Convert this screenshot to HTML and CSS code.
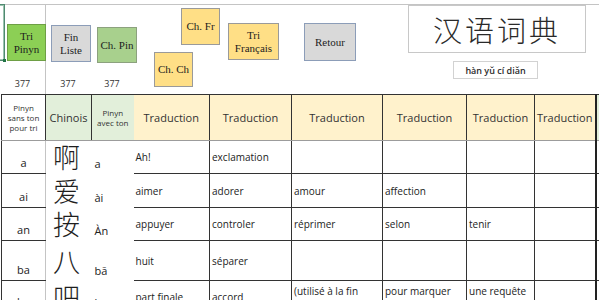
FILE: index.html
```html
<!DOCTYPE html>
<html lang="fr">
<head>
<meta charset="utf-8">
<title>汉语词典</title>
<link rel="stylesheet" href="styles.css">
</head>
<body>
<div class="sheet">
  <div class="top">
    <div class="topgrid">
      <div class="tcell tc1"><span class="count">377</span></div>
      <div class="tcell tc2"><span class="count">377</span></div>
      <div class="tcell tc3"><span class="count">377</span></div>
    </div>

    <div class="selection"><span class="handle"></span></div>

    <div class="shape green tri-pinyn">Tri<br>Pinyn</div>
    <div class="shape grey fin-liste">Fin<br>Liste</div>
    <div class="shape sage ch-pin">Ch. Pin</div>
    <div class="shape amber ch-ch">Ch. Ch</div>
    <div class="shape amber ch-fr">Ch. Fr</div>
    <div class="shape amber tri-fr">Tri<br>Français</div>
    <div class="shape grey retour">Retour</div>

    <div class="title-box">汉语词典</div>
    <div class="pinyin-box">hàn yǔ cí diǎn</div>
  </div>

  <table class="dict">
    <colgroup>
      <col class="w-py"><col class="w-zh"><col class="w-ton">
      <col class="w-t1"><col class="w-t2"><col class="w-t3">
      <col class="w-t4"><col class="w-t5"><col class="w-t6"><col class="w-end">
    </colgroup>
    <thead>
      <tr class="head">
        <th class="h-py small">Pinyn<br>sans ton<br>pour tri</th>
        <th class="h-zh green-h">Chinois</th>
        <th class="h-ton green-h small">Pinyn<br>avec ton</th>
        <th class="h-tr first yellow-h">Traduction</th>
        <th class="h-tr yellow-h">Traduction</th>
        <th class="h-tr yellow-h">Traduction</th>
        <th class="h-tr yellow-h">Traduction</th>
        <th class="h-tr yellow-h">Traduction</th>
        <th class="h-tr yellow-h">Traduction</th>
        <th class="h-end green-h"></th>
      </tr>
    </thead>
    <tbody>
      <tr class="r1">
        <td class="py">a</td><td class="zh">啊</td><td class="ton">a</td>
        <td class="tr first">Ah!</td><td class="tr">exclamation</td><td class="tr"></td>
        <td class="tr"></td><td class="tr"></td><td class="tr"></td><td class="end"></td>
      </tr>
      <tr class="r2">
        <td class="py">ai</td><td class="zh">爱</td><td class="ton">ài</td>
        <td class="tr first">aimer</td><td class="tr">adorer</td><td class="tr">amour</td>
        <td class="tr">affection</td><td class="tr"></td><td class="tr"></td><td class="end"></td>
      </tr>
      <tr class="r3">
        <td class="py">an</td><td class="zh">按</td><td class="ton">Àn</td>
        <td class="tr first">appuyer</td><td class="tr">controler</td><td class="tr">réprimer</td>
        <td class="tr">selon</td><td class="tr">tenir</td><td class="tr"></td><td class="end"></td>
      </tr>
      <tr class="r4">
        <td class="py">ba</td><td class="zh">八</td><td class="ton">bā</td>
        <td class="tr first">huit</td><td class="tr">séparer</td><td class="tr"></td>
        <td class="tr"></td><td class="tr"></td><td class="tr"></td><td class="end"></td>
      </tr>
      <tr class="r5">
        <td class="py">ba</td><td class="zh">吧</td><td class="ton">ba</td>
        <td class="tr first">part finale</td><td class="tr">accord</td><td class="tr wrap">(utilisé à la fin</td>
        <td class="tr wrap">pour marquer</td><td class="tr wrap">une requête</td><td class="tr"></td><td class="end"></td>
      </tr>
    </tbody>
  </table>
</div>
</body>
</html>
```

FILE: styles.css
```css
html, body {
  margin: 0;
  padding: 0;
  background: #ffffff;
}

.sheet {
  width: 599px;
  height: 300px;
  overflow: hidden;
  font-family: "Open Sans", "Liberation Sans", sans-serif;
  color: #222222;
}

/* ---- upper band with the macro buttons ---- */
.top {
  position: relative;
  height: 94px;
  padding-top: 4px;
  box-sizing: border-box;
}

.topgrid {
  height: 90px;
  box-sizing: border-box;
  border-top: 1px solid #c4c4c4;
  display: flex;
}

.tcell {
  display: flex;
  align-items: flex-end;
  justify-content: center;
  padding-bottom: 4px;
  box-sizing: border-box;
}

.tc1 { width: 46px; border-right: 1px solid #c4c4c4; }
.tc2 { width: 44px; }
.tc3 { width: 44px; }

.count {
  font-size: 9px;
  line-height: 12px;
  color: #333333;
}

/* active cell outline */
.selection {
  position: absolute;
  left: -3px;
  top: 4px;
  width: 8px;
  height: 57px;
  box-sizing: border-box;
  border: 1px solid #4f8a70;
  box-shadow: inset 0 0 0 1px #9cc3b0;
}

.selection .handle {
  position: absolute;
  right: -2px;
  bottom: -2px;
  width: 3px;
  height: 3px;
  background: #217346;
}

.shape {
  position: absolute;
  box-sizing: border-box;
  display: flex;
  align-items: center;
  justify-content: center;
  text-align: center;
  font-family: "Liberation Serif", "Times New Roman", serif;
  font-size: 11px;
  line-height: 13px;
  color: #1d1d1d;
  border: 1px solid #8a8a8a;
}

.green { background: #8ccf55; border-color: #6e9f45; }
.grey  { background: #d9d9d9; border-color: #8c9db8; }
.sage  { background: #a8d08d; border-color: #8ca17e; }
.amber { background: #ffdf86; border-color: #9a9a9a; }

.tri-pinyn { left: 7px;   top: 24px; width: 39px; height: 37px; }
.fin-liste { left: 51px;  top: 25px; width: 40px; height: 37px; }
.ch-pin    { left: 97px;  top: 27px; width: 40px; height: 36px; }
.ch-ch     { left: 154px; top: 52px; width: 39px; height: 35px; }
.ch-fr     { left: 181px; top: 8px;  width: 39px; height: 37px; }
.tri-fr    { left: 228px; top: 23px; width: 51px; height: 37px; }
.retour    { left: 304px; top: 23px; width: 52px; height: 38px; }

.title-box {
  position: absolute;
  left: 408px;
  top: 5px;
  width: 178px;
  height: 48px;
  box-sizing: border-box;
  border: 1px solid #c8c8c8;
  background: #ffffff;
  display: flex;
  align-items: center;
  justify-content: center;
  font-family: "Noto Sans CJK SC", sans-serif;
  font-weight: 300;
  font-size: 29px;
  letter-spacing: 3px;
  color: #2a2a2a;
}

.pinyin-box {
  position: absolute;
  left: 453px;
  top: 61px;
  width: 85px;
  height: 18px;
  box-sizing: border-box;
  border: 1px solid #d2d2d2;
  background: #ffffff;
  display: flex;
  align-items: center;
  justify-content: center;
  font-size: 9px;
  font-weight: 600;
  color: #2b2b2b;
}

/* ---- dictionary table ---- */
.dict {
  border-collapse: collapse;
  table-layout: fixed;
  width: 624px;
  margin-left: 1px;
}

.w-py  { width: 44px; }
.w-zh  { width: 46px; }
.w-ton { width: 42px; }
.w-t1  { width: 76px; }
.w-t2  { width: 82px; }
.w-t3  { width: 91px; }
.w-t4  { width: 84px; }
.w-t5  { width: 68px; }
.w-t6  { width: 61px; }
.w-end { width: 30px; }

.dict th,
.dict td {
  padding: 0;
  overflow: hidden;
  white-space: nowrap;
}

.dict th {
  height: 45px;
  border: 1px solid #333333;
  border-bottom-color: #9c9c9c;
  font-weight: 400;
  font-size: 11px;
  color: #333333;
  text-align: center;
  vertical-align: middle;
}

.dict th.small {
  font-size: 8px;
  line-height: 10px;
}

.green-h  { background: #e2efda; }
.yellow-h { background: #fff2cc; }

.dict th.h-ton { border-right: none; }
.dict th.h-tr.first { border-left: none; }
.dict th.h-end { border-left: 2px solid #222222; }

.r1 { height: 33px; }
.r2 { height: 34px; }
.r3 { height: 33px; }
.r4 { height: 40px; }
.r5 { height: 32px; }

.dict td.py {
  border-left: 1px solid #333333;
  border-right: 1px solid #c4c4c4;
  border-bottom: 1px solid #333333;
  text-align: center;
  vertical-align: bottom;
  font-size: 11px;
  line-height: 14px;
  padding-bottom: 3px;
}

.dict td.zh {
  font-family: "Noto Sans CJK SC", sans-serif;
  font-weight: 300;
  font-size: 27px;
  line-height: 28px;
  padding-left: 7px;
  vertical-align: middle;
  color: #1e1e1e;
  overflow: visible;
}

.dict td.ton {
  font-size: 11px;
  line-height: 14px;
  padding-left: 3px;
  padding-bottom: 3px;
  vertical-align: bottom;
}

.dict td.tr {
  border-right: 1px solid #333333;
  border-bottom: 1px solid #333333;
  font-size: 10px;
  line-height: 14px;
  padding-left: 2px;
  vertical-align: middle;
}

.dict td.tr.first { border-left: none; }

.dict td.tr.wrap {
  vertical-align: top;
  padding-top: 3px;
}

.dict td.end {
  border-left: 2px solid #222222;
  border-bottom: 1px solid #333333;
}
```
